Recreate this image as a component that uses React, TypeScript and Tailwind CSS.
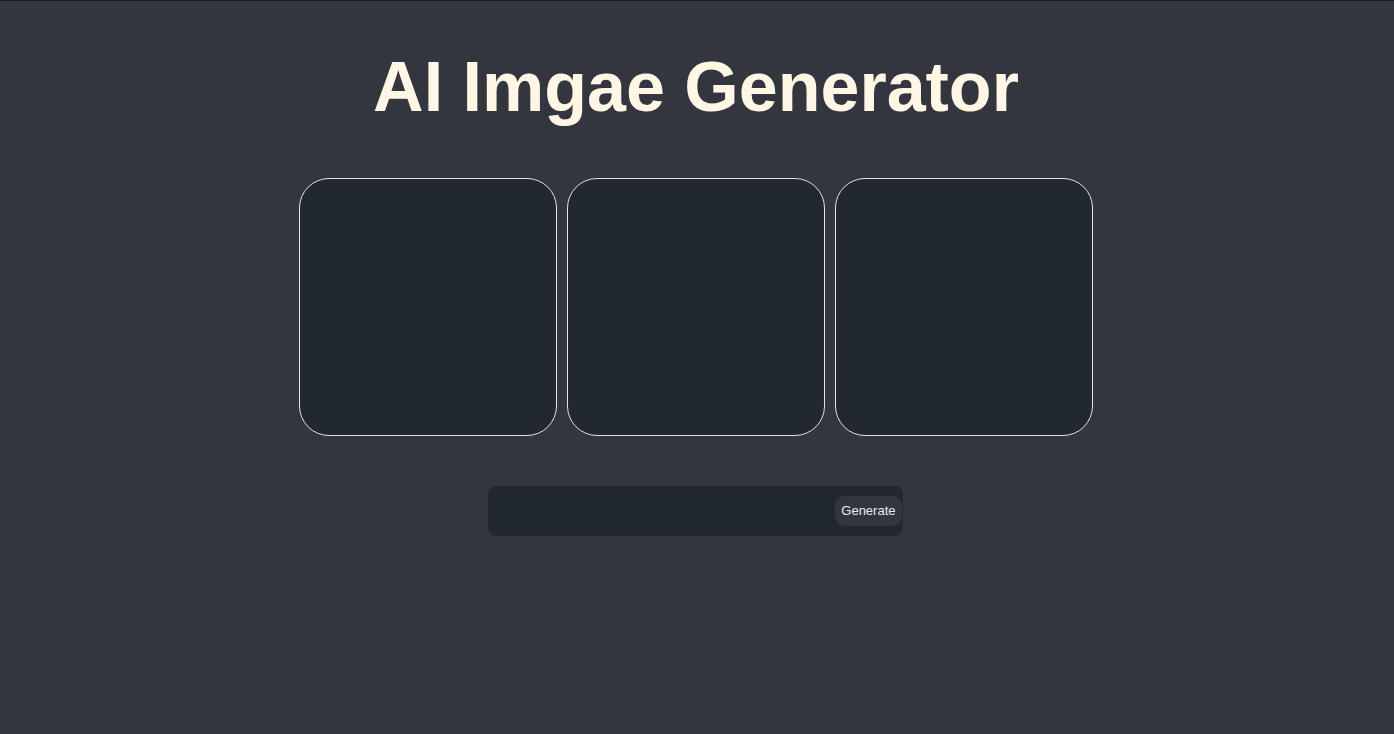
export default function App() {
  return (
    <div className="min-h-[734px] w-full bg-[#33363f] border-t border-[#1c1c1c] flex flex-col items-center pr-[2px]" style={{ fontFamily: '"Liberation Sans", Arial, sans-serif' }}>
      <h1 className="mt-[46px] text-[70px] leading-[80px] font-bold text-[#fff6e3]">AI Imgae Generator</h1>
      <div className="mt-[51px] flex gap-[10px]">
        {[0, 1, 2].map((i) => (
          <div key={i} className="w-[258px] h-[258px] rounded-[30px] border border-[#e2e2e2] bg-[#222831]" />
        ))}
      </div>
      <div className="mt-[50px] mr-[2px] w-[415px] h-[50px] rounded-[8px] bg-[#222831] flex items-center justify-end pr-[1px]">
        <button className="h-[30px] px-[6px] rounded-[10px] bg-[#33363f] text-[13px] text-[#eaeaea]">Generate</button>
      </div>
    </div>
  );
}
